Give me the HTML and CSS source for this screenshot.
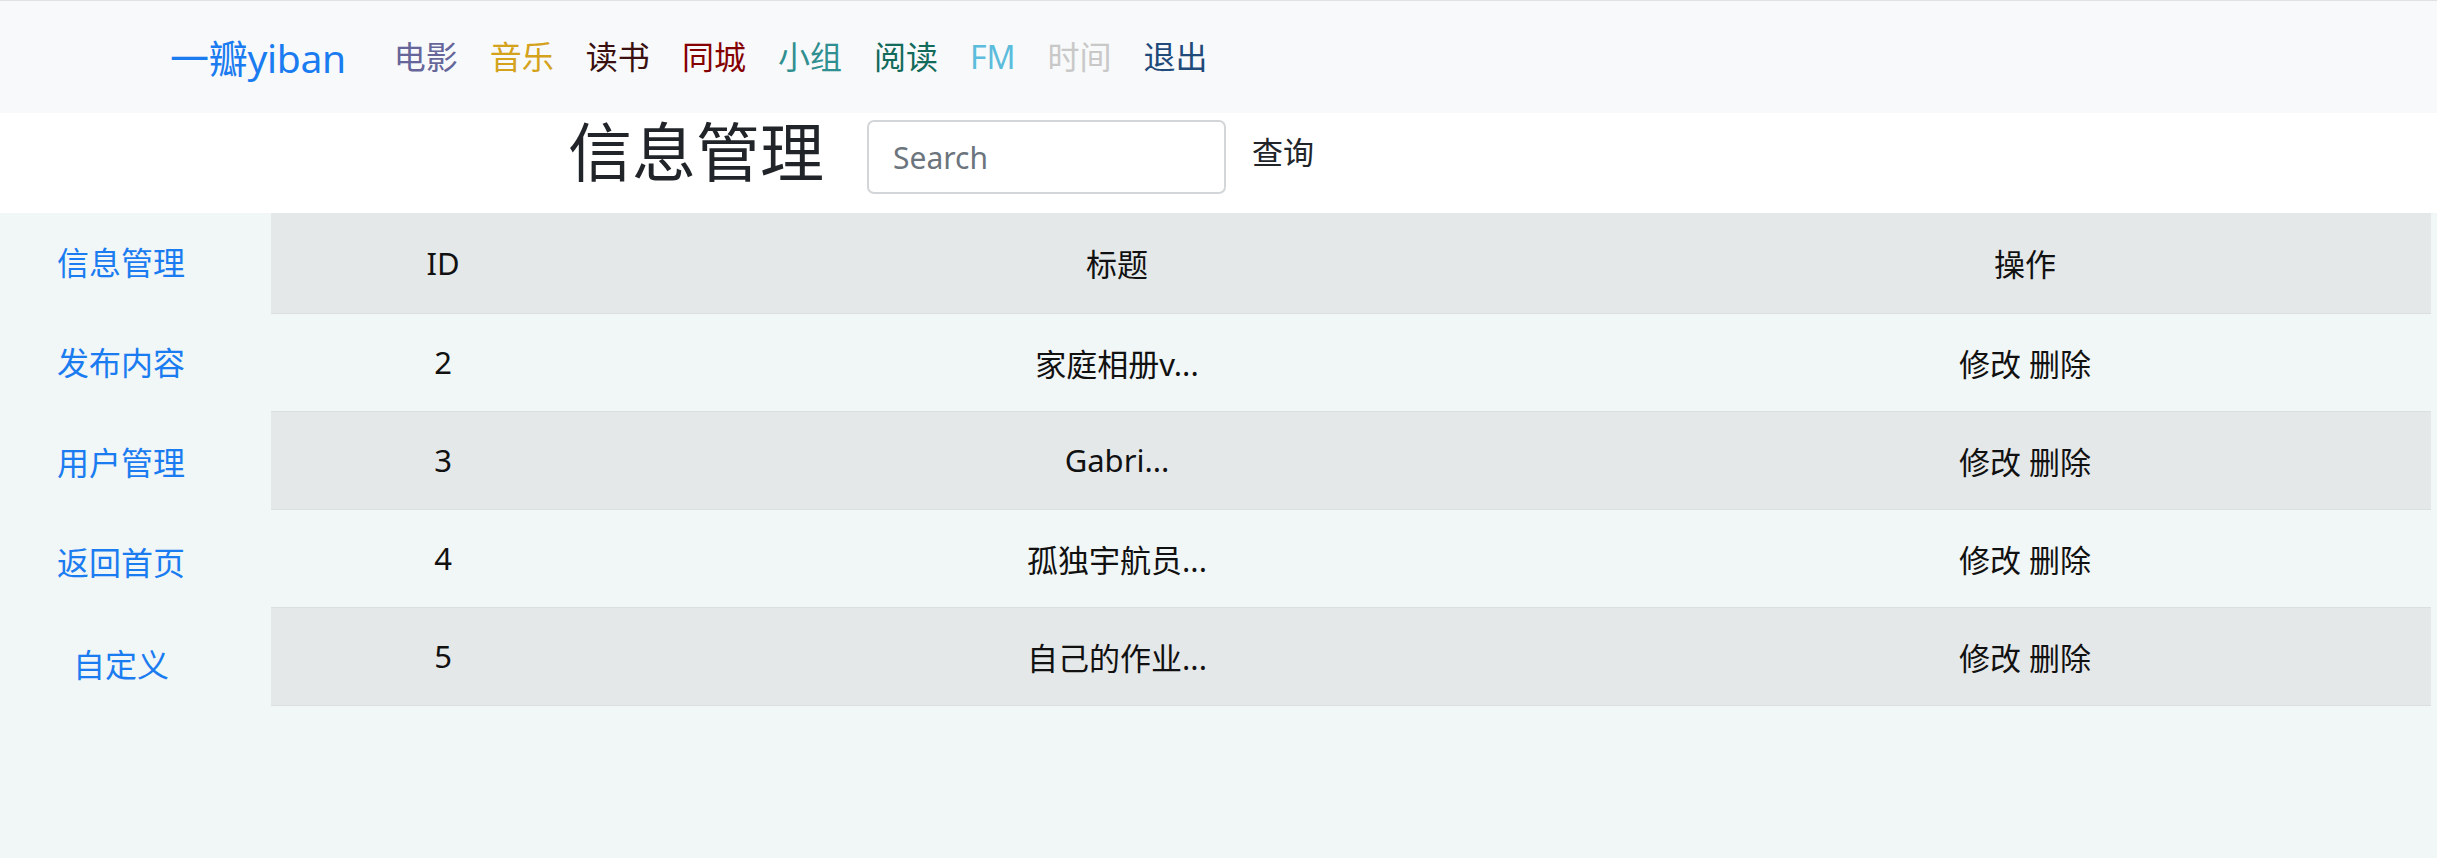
FILE: index.html
```html
<!DOCTYPE html>
<html lang="zh-CN">
<head>
<meta charset="utf-8">
<title>信息管理</title>
<link rel="stylesheet" href="styles.css">
</head>
<body>
<nav class="topnav">
  <a class="brand" href="#">一瓣yiban</a>
  <ul class="nav-links">
    <li><a class="c-movie" href="#">电影</a></li>
    <li><a class="c-music" href="#">音乐</a></li>
    <li><a class="c-book" href="#">读书</a></li>
    <li><a class="c-city" href="#">同城</a></li>
    <li><a class="c-group" href="#">小组</a></li>
    <li><a class="c-read" href="#">阅读</a></li>
    <li><a class="c-fm" href="#">FM</a></li>
    <li><a class="c-time" href="#">时间</a></li>
    <li><a class="c-exit" href="#">退出</a></li>
  </ul>
</nav>
<header class="page-head">
  <h1 class="title">信息管理</h1>
  <form class="search">
    <input class="search-input" type="text" placeholder="Search">
    <button class="search-btn" type="button">查询</button>
  </form>
</header>
<main class="content">
  <aside class="sidebar">
    <ul class="side-links">
      <li><a href="#">信息管理</a></li>
      <li><a href="#">发布内容</a></li>
      <li><a href="#">用户管理</a></li>
      <li><a href="#">返回首页</a></li>
      <li><a href="#">自定义</a></li>
    </ul>
  </aside>
  <table class="data">
    <colgroup>
      <col class="col-id">
      <col class="col-title">
      <col class="col-op">
    </colgroup>
    <thead>
      <tr><th>ID</th><th>标题</th><th>操作</th></tr>
    </thead>
    <tbody>
      <tr><td>2</td><td>家庭相册v...</td><td>修改 删除</td></tr>
      <tr><td>3</td><td>Gabri...</td><td>修改 删除</td></tr>
      <tr><td>4</td><td>孤独宇航员...</td><td>修改 删除</td></tr>
      <tr><td>5</td><td>自己的作业...</td><td>修改 删除</td></tr>
    </tbody>
  </table>
</main>
</body>
</html>
```

FILE: styles.css
```css
html, body {
  margin: 0;
  padding: 0;
}
body {
  font-family: "Noto Sans", "Noto Sans CJK SC", sans-serif;
  background: #f1f6f6;
  color: #212529;
  min-height: 858px;
}
a {
  text-decoration: none;
}
ul {
  list-style: none;
  margin: 0;
  padding: 0;
}

/* top navigation */
.topnav {
  display: flex;
  align-items: center;
  height: 112px;
  border-top: 1px solid #dfe2e5;
  background: #f8f9fa;
  padding-left: 170px;
}
.brand {
  font-size: 39px;
  color: #1a7cf0;
  margin-right: 32px;
  line-height: 1;
  letter-spacing: -0.3px;
}
.nav-links {
  display: flex;
}
.nav-links a {
  display: block;
  padding: 0 16px;
  font-size: 32px;
  line-height: 1;
}
.c-movie { color: #66669a; }
.c-music { color: #d4a21b; }
.c-book { color: #3a1010; }
.c-city { color: #850000; }
.c-group { color: #2f8f91; }
.c-read { color: #136b5b; }
.c-fm { color: #5bbcdc; }
.c-time { color: #c8c8c8; }
.c-exit { color: #1f4a7a; }

/* page heading */
.page-head {
  display: flex;
  align-items: flex-start;
  height: 100px;
  background: #ffffff;
  padding-left: 568px;
}
.title {
  margin: 7px 43px 0 0;
  font-size: 64px;
  font-weight: 400;
  line-height: 1;
  color: #212529;
}
.search {
  display: flex;
  align-items: flex-start;
  margin: 7px 0 0 0;
}
.search-input {
  box-sizing: border-box;
  width: 359px;
  height: 74px;
  border: 2px solid #d3d6d9;
  border-radius: 7px;
  padding: 0 24px;
  font-family: "Noto Sans", "Noto Sans CJK SC", sans-serif;
  font-size: 30px;
  color: #495057;
  background: #fff;
  outline: none;
}
.search-input::placeholder {
  color: #6c757d;
}
.search-btn {
  margin: 14px 0 0 26px;
  padding: 0;
  border: 0;
  background: none;
  font-family: "Noto Sans", "Noto Sans CJK SC", sans-serif;
  font-size: 31px;
  line-height: 1.2;
  color: #212529;
}

/* content */
.content {
  display: flex;
  align-items: flex-start;
}
.sidebar {
  width: 242px;
  flex: none;
  margin-right: 29px;
}
.side-links li {
  height: 100px;
  display: flex;
  align-items: center;
  justify-content: center;
}
.side-links a {
  font-size: 32px;
  color: #1a7cf0;
  line-height: 1;
}
.side-links li:last-child a {
  position: relative;
  top: 2px;
}

.data {
  width: 2160px;
  border-collapse: collapse;
  table-layout: fixed;
  flex: none;
}
.col-id { width: 344px; }
.col-title { width: 1004px; }
.col-op { width: 812px; }
.data th,
.data td {
  text-align: center;
  vertical-align: middle;
  font-size: 31px;
  font-weight: 400;
  color: #111;
  padding: 0;
}
.data thead tr {
  height: 100px;
  background: #e5e8e9;
}
.data tbody tr {
  height: 98px;
  border-top: 1px solid #dcdfe1;
}
.data tbody tr:nth-child(odd) {
  background: #f1f6f6;
}
.data tbody tr:nth-child(even) {
  background: #e5e8e9;
}
.data tbody tr:last-child {
  border-bottom: 1px solid #dcdfe1;
}
```
